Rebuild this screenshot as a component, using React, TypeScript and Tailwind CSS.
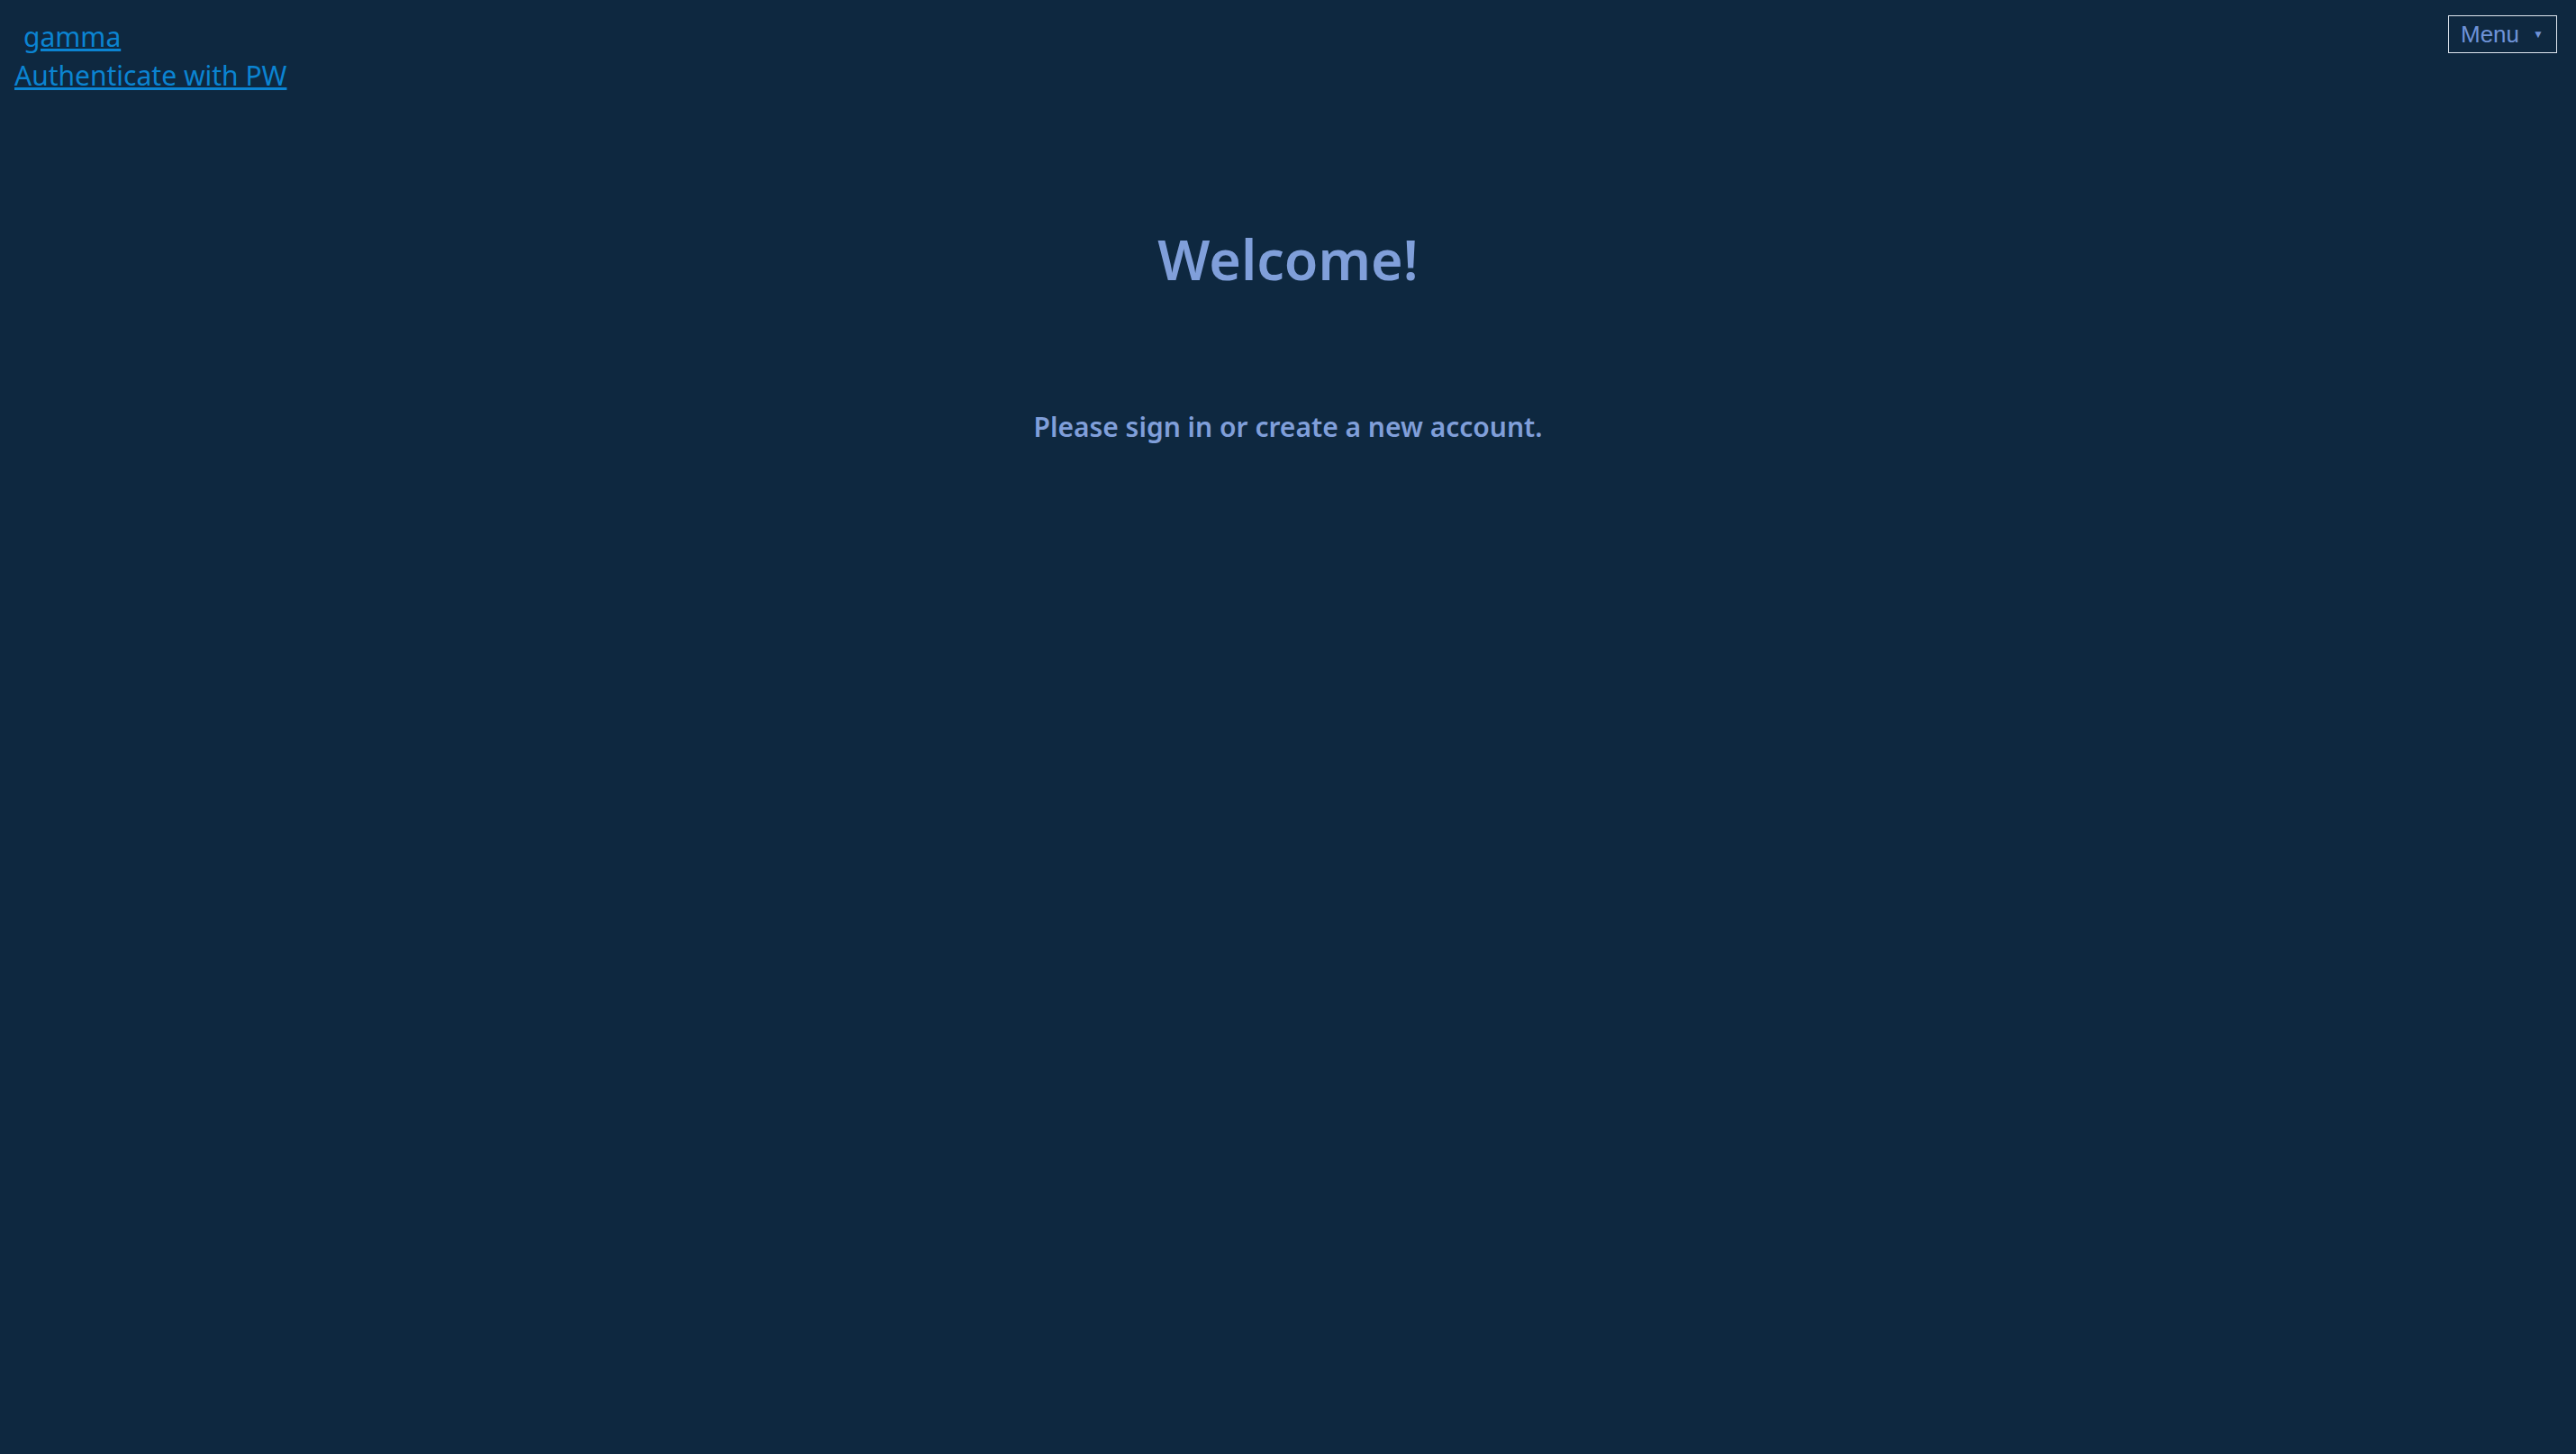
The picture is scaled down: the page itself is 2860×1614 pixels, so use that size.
import React from "react";

export default function App() {
  return (
    <div
      className="relative min-h-screen w-full bg-[#0e2840]"
      style={{ fontFamily: '"Noto Sans", "Open Sans", sans-serif' }}
    >
      <div className="flex flex-col items-start pl-[16px] pt-[19px] text-[30px] leading-[43px] text-[#0b84d2]">
        <a href="#" className="ml-[10px] underline">gamma</a>
        <a href="#" className="underline">Authenticate with PW</a>
      </div>

      <button
        className="absolute right-[21px] top-[17px] flex h-[42px] w-[121px] items-center border border-[#dfe6ef] pl-[13px] text-[#6f93d8]"
        style={{ fontFamily: '"Liberation Sans", Arial, sans-serif' }}
      >
        <span className="text-[26px] leading-none">Menu</span>
        <span className="ml-[15px] text-[12px] leading-none">▼</span>
      </button>

      <div className="flex flex-col items-center text-[#809fda]">
        <h1 className="mt-[143px] text-[61px] font-semibold leading-[80px]">Welcome!</h1>
        <p className="mt-[124px] text-[30px] font-semibold leading-[44px]">
          Please sign in or create a new account.
        </p>
      </div>
    </div>
  );
}
